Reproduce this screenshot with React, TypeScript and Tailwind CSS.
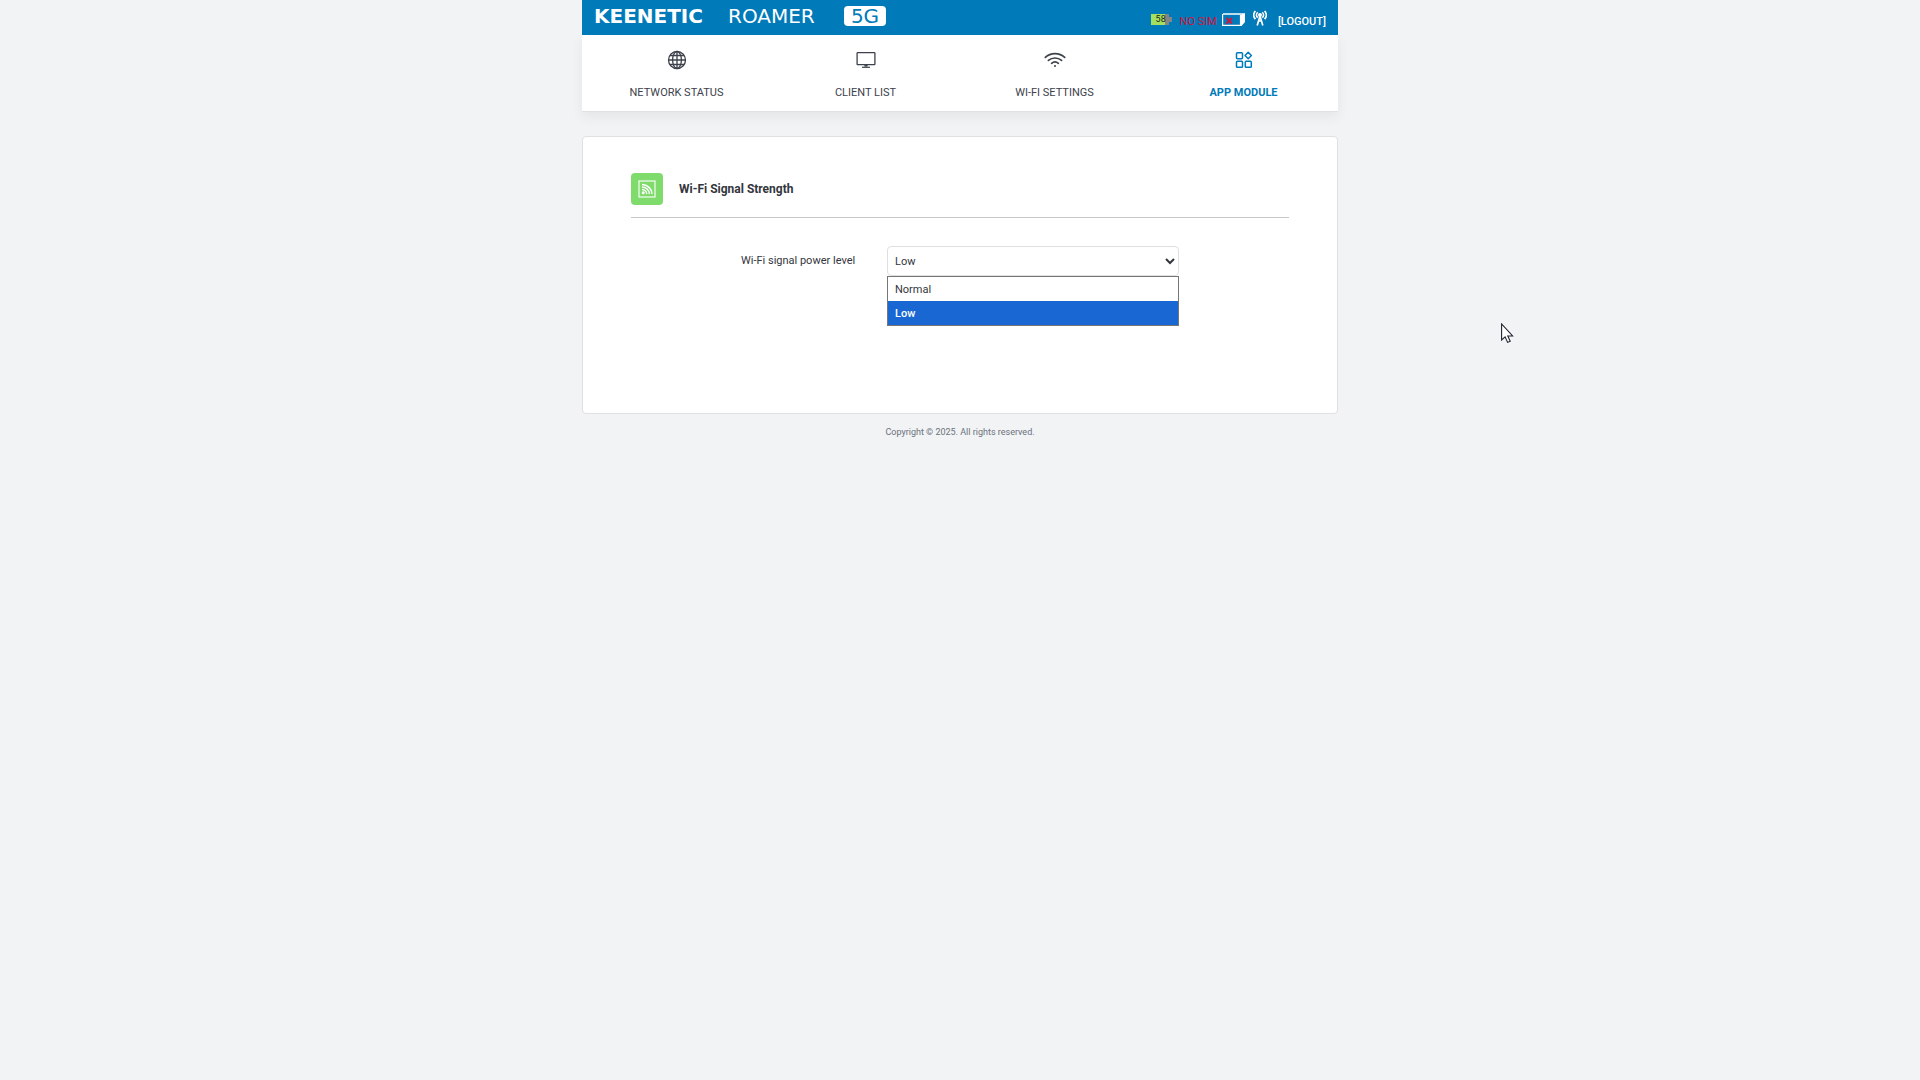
import { useState } from 'react';
import type { ReactNode } from 'react';
import clsx from 'clsx';

// ─── Icons ────────────────────────────────────────────────────────────────────

function GlobeIcon() {
  return (
    <svg width="20" height="20" viewBox="0 0 20 20" fill="none" stroke="currentColor" strokeWidth="1.3">
      <circle cx="10" cy="10" r="8.5" />
      <ellipse cx="10" cy="10" rx="4.4" ry="8.5" />
      <path d="M10 1.5v17M1.5 10h17M3 5.5h14M3 14.5h14" />
    </svg>
  );
}

function MonitorIcon() {
  return (
    <svg width="20" height="20" viewBox="0 0 20 20" fill="none" stroke="currentColor" strokeWidth="1.3">
      <rect x="1.1" y="2.6" width="17.8" height="12" rx="0.6" />
      <path d="M8.4 14.6h3.2v2H8.4z" fill="currentColor" stroke="none" />
      <path d="M6 17.3h8" strokeWidth="1.2" />
    </svg>
  );
}

function WifiIcon() {
  return (
    <svg width="22" height="20" viewBox="0 0 22 20" fill="none" stroke="currentColor" strokeWidth="1.7" strokeLinecap="round">
      <path d="M1.3 7.4C6.6 2.4 15.4 2.4 20.7 7.4" />
      <path d="M4.4 10.4c3.7-3.2 9.5-3.2 13.2 0" />
      <path d="M7.6 13.3c2-1.6 4.8-1.6 6.8 0" />
      <circle cx="11" cy="16" r="1" fill="currentColor" stroke="none" />
    </svg>
  );
}

function AppsIcon() {
  return (
    <svg width="20" height="20" viewBox="0 0 20 20" fill="none" stroke="currentColor" strokeWidth="1.5">
      <rect x="2.5" y="2.7" width="6" height="6" rx="0.9" />
      <path d="M14.2 2.3l3.2 3.2-3.2 3.2L11 5.5z" strokeLinejoin="round" />
      <rect x="2.5" y="11.3" width="6" height="6" rx="0.9" />
      <rect x="11.3" y="11.3" width="6" height="6" rx="0.9" />
    </svg>
  );
}

function SignalIcon() {
  return (
    <svg width="18" height="18" viewBox="0 0 18 18" fill="none" stroke="#fff">
      <rect x="1" y="1" width="16" height="16" strokeWidth="1.1" />
      <g strokeWidth="1.4">
        <path d="M4 4.5c5.5 0 10 4.5 10 9.5" />
        <path d="M4 7c4 0 7.3 3.3 7.3 7" />
        <path d="M4 9.5c2.6 0 4.7 2 4.7 4.5" />
      </g>
      <circle cx="5.2" cy="12.8" r="1.5" fill="#fff" stroke="none" />
    </svg>
  );
}

function SimIcon() {
  return (
    <svg width="24" height="14" viewBox="0 0 24 14" fill="none">
      <path d="M0.6 2.5h17.9v10.8H0.6z" stroke="#fff" strokeWidth="1.2" />
      <path d="M1 1h22l-4 2H1z" fill="#b9dcf0" />
      <path d="M18 3l5-2v9l-3.5 4H18z" fill="#fff" />
      <path d="M4.5 6l5.5 5.5M10 6l-5.5 5.5" stroke="#d2143c" strokeWidth="1.8" />
    </svg>
  );
}

function AntennaIcon() {
  return (
    <svg width="14" height="16" viewBox="0 0 14 16" fill="none" stroke="#fff">
      <path d="M2.4 1C0.2 3.4 0.2 6.8 2.4 9.2M11.6 1c2.2 2.4 2.2 5.8 0 8.2" strokeWidth="1.8" />
      <path d="M4.7 2.3c-1.5 1.6-1.5 3.9 0 5.5M9.3 2.3c1.5 1.6 1.5 3.9 0 5.5" strokeWidth="1.5" />
      <circle cx="7" cy="5" r="2" fill="#fff" stroke="none" />
      <path d="M7 6L4.2 15.5M7 6l2.8 9.5M5.5 11h3" strokeWidth="1.7" />
    </svg>
  );
}

function Pointer() {
  return (
    <svg className="fixed left-[1501px] top-[323px]" width="13" height="21" viewBox="0 0 13 21">
      <path
        d="M0.6 1v16l3.5-3.2L6.6 19.4l2.6-1.1-2.4-5.3h4.8z"
        fill="#fff"
        stroke="#23202e"
        strokeWidth="1.1"
      />
    </svg>
  );
}

// ─── Header ───────────────────────────────────────────────────────────────────

function Header() {
  return (
    <header className="flex h-[35px] justify-between bg-[#007ab9] px-3 text-white">
      <div className="grid h-8 grid-cols-[134px_116px_42px] items-center font-['DejaVu_Sans',sans-serif] text-xl leading-5">
        <span className="font-bold">KEENETIC</span>
        <span>ROAMER</span>
        <span className="h-5 rounded bg-white text-center text-[#007ab9]">5G</span>
      </div>

      <div className="flex items-center pt-1">
        <div className="flex items-center text-[9px] leading-none text-[#222]">
          <span className="h-[11px] w-[14px] whitespace-nowrap bg-[#a3e05f]" />
          <span className="-ml-[9px] flex h-[11px] w-[13px] items-center bg-linear-to-r from-[#a3e05f] from-70% to-[#858585] to-70%">
            58
          </span>
          <span className="h-[5px] w-[3px] bg-[#858585]" />
        </div>
        <span className="ml-2 mt-1 text-[11px] leading-4 text-[#d2143c]">NO SIM</span>
        <span className="mb-0.5 ml-[5px]"><SimIcon /></span>
        <span className="mb-1 ml-[7px]"><AntennaIcon /></span>
        <a href="#logout" className="ml-[11px] mt-1 text-[11px] font-medium leading-4">[LOGOUT]</a>
      </div>
    </header>
  );
}

// ─── Navigation ───────────────────────────────────────────────────────────────

const TABS: Array<{ id: string; label: string; icon: ReactNode }> = [
  { id: 'network', label: 'NETWORK STATUS', icon: <GlobeIcon /> },
  { id: 'clients', label: 'CLIENT LIST',    icon: <MonitorIcon /> },
  { id: 'wifi',    label: 'WI-FI SETTINGS', icon: <WifiIcon /> },
  { id: 'apps',    label: 'APP MODULE',     icon: <AppsIcon /> },
];

function Nav() {
  return (
    <nav className="grid grid-cols-4 border-b border-[#dfe1e4] bg-white shadow-[0_5px_12px_rgba(0,0,0,0.06)]">
      {TABS.map(({ id, label, icon }) => (
        <a
          key={id}
          href={`#${id}`}
          className={clsx(
            'flex flex-col items-center gap-[15px] pb-2.5 pt-[15px] text-[11px] leading-4',
            id === 'apps' ? 'font-bold text-[#007ab9]' : 'text-[#3d414b]'
          )}
        >
          {icon}
          {label}
        </a>
      ))}
    </nav>
  );
}

// ─── Power level ──────────────────────────────────────────────────────────────

const LEVELS = ['Normal', 'Low'];

function PowerLevel() {
  const [level, setLevel] = useState('Low');

  return (
    <div className="mt-7 flex items-start gap-[30px] pl-[110px] text-[11px]">
      <label htmlFor="power" className="w-[116px] whitespace-nowrap pt-[7px] leading-4">
        Wi-Fi signal power level
      </label>
      <div className="relative w-[292px]">
        <select
          id="power"
          value={level}
          onChange={(e) => setLevel(e.target.value)}
          className="block h-[30px] w-full rounded-sm border border-[#dfdfdf] bg-white px-[3px]"
        >
          {LEVELS.map((l) => <option key={l}>{l}</option>)}
        </select>
        <ul role="listbox" className="absolute left-0 top-full w-full border border-[#767676] bg-white">
          {LEVELS.map((l) => (
            <li
              key={l}
              role="option"
              aria-selected={l === level}
              onClick={() => setLevel(l)}
              className={clsx('px-[7px] pt-0.5 leading-[22px]', l === level && 'bg-[#1967d2] font-medium text-white')}
            >
              {l}
            </li>
          ))}
        </ul>
      </div>
    </div>
  );
}

export default function App() {
  return (
    <div className="min-h-screen bg-[#f1f3f5] font-[Roboto,sans-serif] text-[#33363d]">
      <div className="mx-auto max-w-[756px]">
        <Header />
        <Nav />
        <main className="mt-6 min-h-[278px] rounded border border-[#dfe0e2] bg-white px-12 pt-9">
          <div className="flex items-center gap-4 border-b border-[#c8c8c8] pb-3">
            <span className="flex size-8 items-center justify-center rounded bg-[#7edb6c]">
              <SignalIcon />
            </span>
            <h1 className="text-xs font-bold">Wi-Fi Signal Strength</h1>
          </div>
          <PowerLevel />
        </main>
        <footer className="pt-2.5 text-center text-[9px] leading-4 text-[#6c717c]">
          Copyright © 2025. All rights reserved.
        </footer>
      </div>
      <Pointer />
    </div>
  );
}
